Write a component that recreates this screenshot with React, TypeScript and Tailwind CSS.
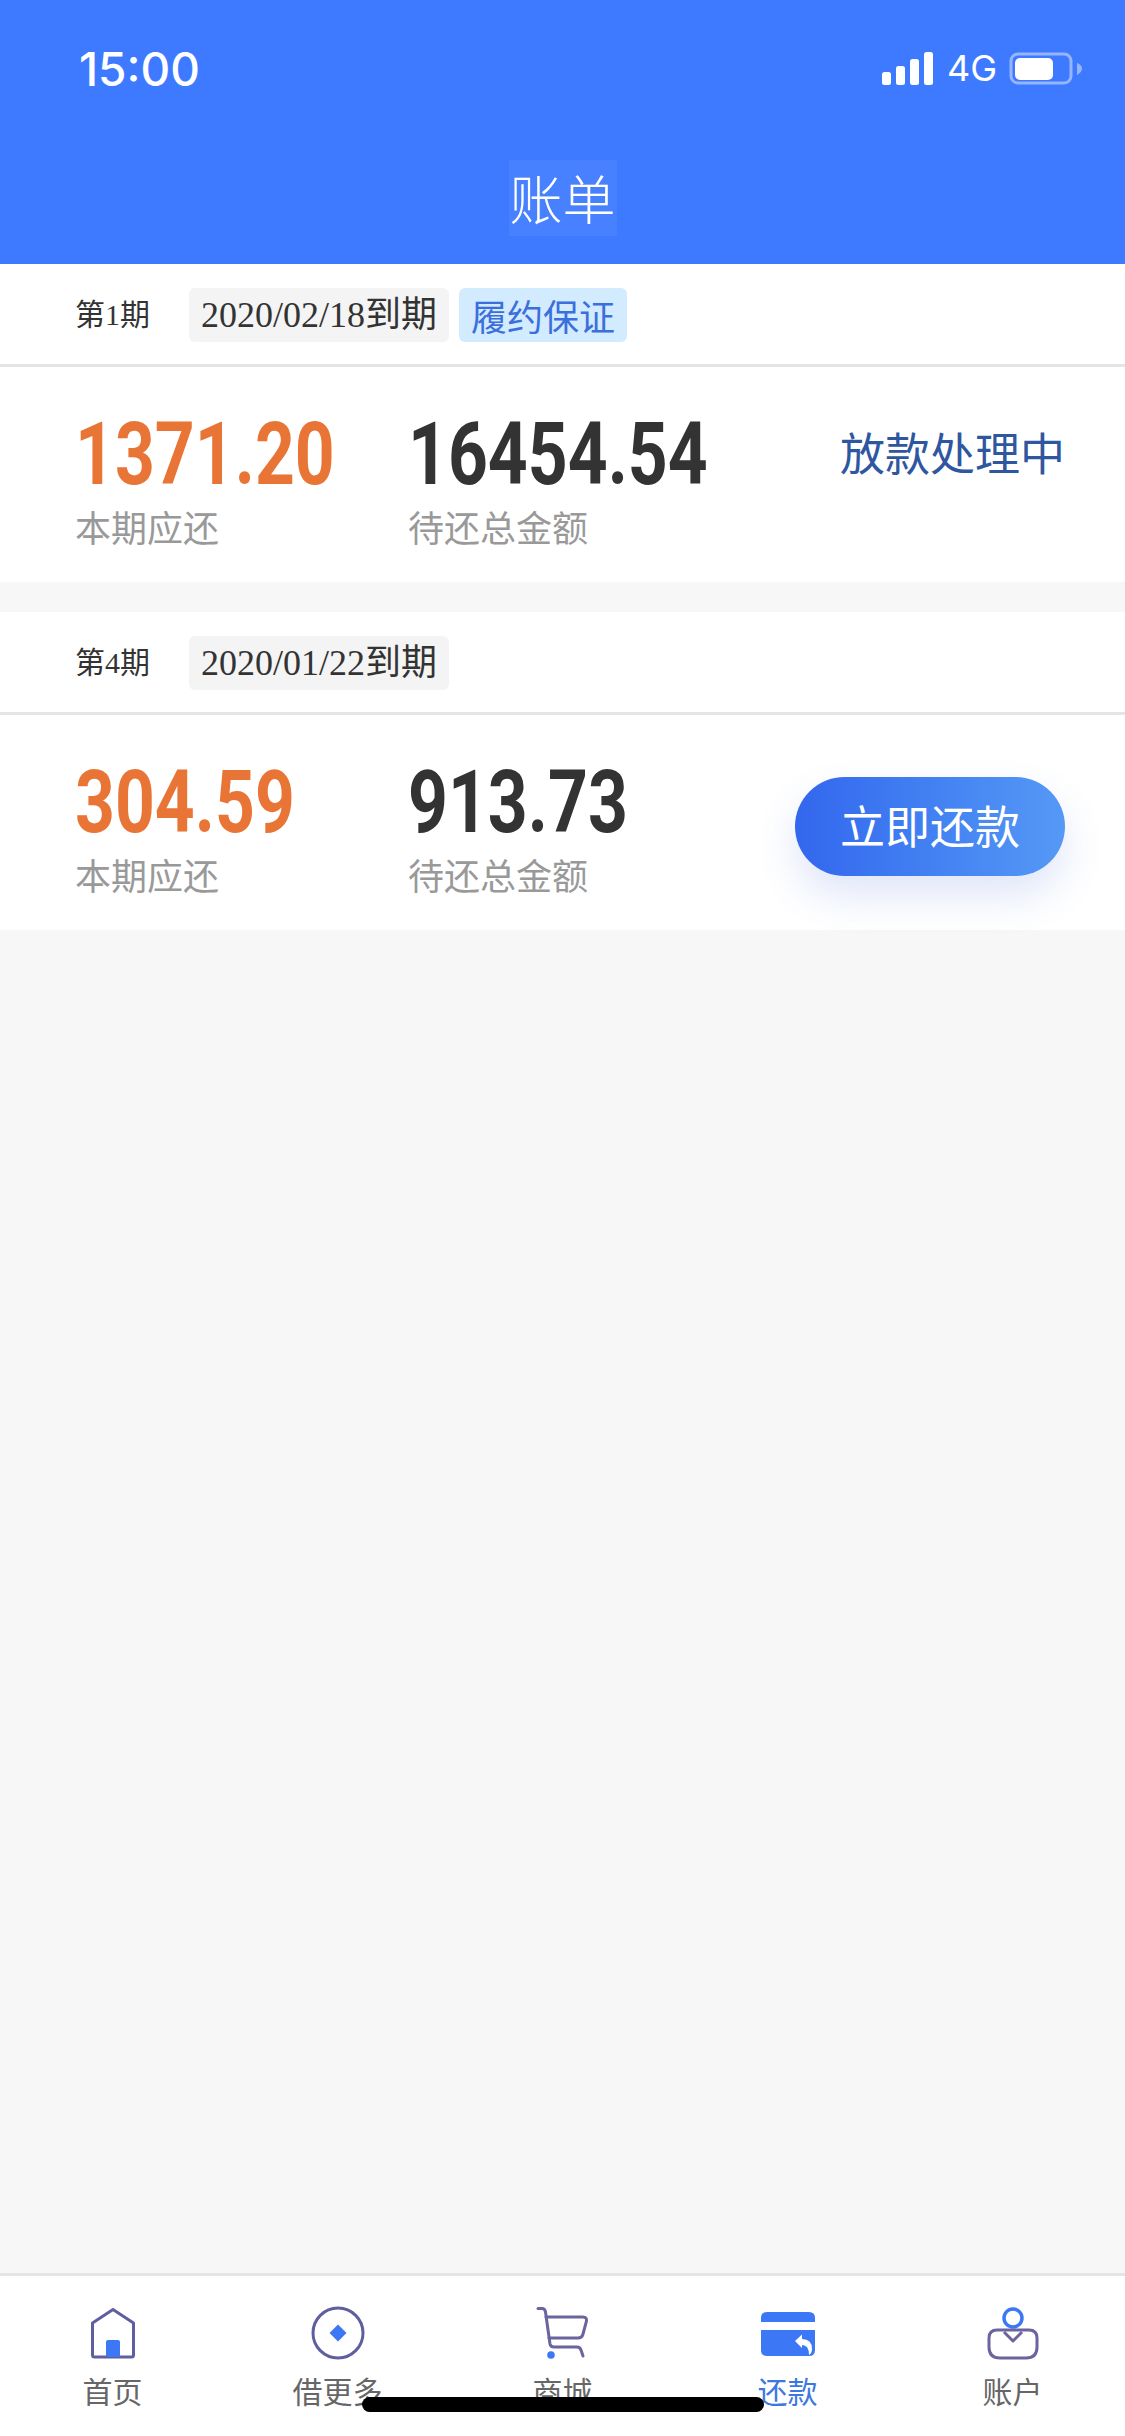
const CJK = "'Noto Sans CJK SC', sans-serif"

const TABS = [
  { label: '首页', icon: <HomeIcon /> },
  { label: '借更多', icon: <DiamondIcon /> },
  { label: '商城', icon: <CartIcon /> },
  { label: '还款', icon: <CardIcon />, active: true },
  { label: '账户', icon: <UserIcon /> },
]

function HomeIcon() {
  return (
    <svg width="60" height="60" viewBox="0 0 60 60" fill="none">
      <path d="M30 6.500 L50.500 20 V52 Q50.500 54 48.500 54 H11.500 Q9.500 54 9.500 52 V20 Z" stroke="#5F5F9F" strokeWidth="3" strokeLinejoin="round" />
      <rect x="23" y="37" width="14" height="17" rx="2" fill="#3C78F5" />
    </svg>
  )
}

function DiamondIcon() {
  return (
    <svg width="60" height="60" viewBox="0 0 60 60" fill="none">
      <circle cx="30" cy="30" r="25" stroke="#5F5F9F" strokeWidth="3" />
      <path d="M30 21.500 L38.500 30 L30 38.500 L21.500 30 Z" fill="#3C78F5" />
    </svg>
  )
}

function CartIcon() {
  return (
    <svg width="60" height="60" viewBox="0 0 60 60" fill="none">
      <path d="M5 5.500 H9 Q12 5.500 12.500 9 L17 41 Q17.500 44 21 44 H44 Q47 44 48 47 L50 53" stroke="#6B659F" strokeWidth="3" strokeLinecap="round" />
      <path d="M13 14 H50 Q54 14 53.500 18 L50 31 Q49 35 45 35 H16" stroke="#6B659F" strokeWidth="3" strokeLinecap="round" />
      <circle cx="18" cy="52" r="3.800" fill="#3C78F5" />
    </svg>
  )
}

function CardIcon() {
  return (
    <svg width="60" height="60" viewBox="0 0 60 60" fill="none">
      <path d="M3 15 Q3 9 9 9 H51 Q57 9 57 15 V19 H3 Z" fill="#3C78F5" />
      <path d="M3 27 H57 V47 Q57 53 51 53 H9 Q3 53 3 47 Z" fill="#3C78F5" />
      <path d="M37 38 L44 31.500 V36 Q54 36 54 46 Q54 50 51 52 Q51 42 44 42 V45 Z" fill="#fff" />
    </svg>
  )
}

function UserIcon() {
  return (
    <svg width="60" height="60" viewBox="0 0 60 60" fill="none">
      <circle cx="30" cy="15" r="9" stroke="#3C78F5" strokeWidth="3.500" />
      <path d="M14 27 H46 Q54 27 54 35 V44 Q54 55 43 55 H17 Q6 55 6 44 V35 Q6 27 14 27 Z" stroke="#6B659F" strokeWidth="3" />
      <path d="M21 29 L30 38 L39 29" stroke="#6B659F" strokeWidth="3" strokeLinejoin="round" />
    </svg>
  )
}

function StatusBar() {
  return (
    <div className="flex items-start justify-between pl-[79px] pr-[43px] pt-[46px] text-white">
      <span className="text-[46px] leading-[46px] font-medium" style={{ fontFamily: "Inter, sans-serif" }}>15:00</span>
      <div className="flex items-center pt-[6px]">
        <svg width="51" height="33" viewBox="0 0 51 33" fill="#fff">
          <rect x="0" y="20" width="9" height="13" rx="2.500" />
          <rect x="14" y="14" width="9" height="19" rx="2.500" />
          <rect x="28" y="7" width="9" height="26" rx="2.500" />
          <rect x="42" y="0" width="9" height="33" rx="2.500" />
        </svg>
        <span className="ml-[14px] w-[62px] text-[36px] leading-[33px]" style={{ fontFamily: "Inter, sans-serif" }}>4G</span>
        <svg width="73" height="33" viewBox="0 0 73 33" fill="none">
          <rect x="2" y="2" width="60" height="29" rx="7" stroke="#fff" strokeOpacity="0.45" strokeWidth="3" />
          <rect x="6" y="6" width="38" height="22" rx="5" fill="#fff" />
          <path d="M68 11 Q73 13 73 16.500 Q73 20 68 23 Z" fill="#fff" fillOpacity="0.45" />
        </svg>
      </div>
    </div>
  )
}

interface BillProps {
  period: string
  due: string
  guarantee?: boolean
  amount: string
  total: string
  action: React.ReactNode
}

function Bill({ period, due, guarantee, amount, total, action }: BillProps) {
  return (
    <section className="bg-white">
      <div className="flex h-[100px] items-center pt-[1px] pl-[75px]">
        <span className="w-[114px] text-[30px] text-[#333]" style={{ fontFamily: "'Liberation Serif', " + CJK }}>{period}</span>
        <span className="flex h-[54px] w-[260px] items-center justify-center rounded-[6px] bg-[#F4F4F4] text-[36px] text-[#333]" style={{ fontFamily: "'Liberation Serif', " + CJK }}>{due}</span>
        {guarantee && (
          <span className="ml-[10px] flex h-[54px] w-[168px] items-center justify-center rounded-[6px] bg-[#D2EBFF] text-[36px] text-[#3A6FDC]">履约保证</span>
        )}
      </div>
      <div className="h-[3px] bg-[#E5E5E5]" />
      <div className="flex h-[215px] items-start pl-[75px] pr-[60px]">
        <div className="w-[333px] pt-[37px]">
          <p className="origin-left scale-x-[0.8] text-[87px] leading-[100px] font-bold whitespace-nowrap text-[#E87535]" style={{ fontFamily: "Roboto, sans-serif" }}>{amount}</p>
          <p className="text-[36px] leading-[44px] text-[#999]">本期应还</p>
        </div>
        <div className="pt-[37px]">
          <p className="origin-left scale-x-[0.8] text-[87px] leading-[100px] font-bold whitespace-nowrap text-[#333]" style={{ fontFamily: "Roboto, sans-serif" }}>{total}</p>
          <p className="text-[36px] leading-[44px] text-[#999]">待还总金额</p>
        </div>
        <div className="ml-auto">{action}</div>
      </div>
    </section>
  )
}

export default function App() {
  return (
    <div className="relative flex min-h-[2436px] flex-col overflow-hidden bg-[#F7F7F7]" style={{ fontFamily: CJK }}>
      <header className="h-[264px] bg-[#3E7AFF]">
        <StatusBar />
        <div className="mt-[68px] flex justify-center">
          <h1 className="flex h-[76px] w-[108px] items-center justify-center bg-white/5 text-[53px] font-light text-white">账单</h1>
        </div>
      </header>

      <Bill
        period="第1期"
        due="2020/02/18到期"
        guarantee
        amount="1371.20"
        total="16454.54"
        action={<p className="pt-[53px] text-[45px] leading-[64px] text-[#2F579F]">放款处理中</p>}
      />
      <div className="h-[30px]" />
      <Bill
        period="第4期"
        due="2020/01/22到期"
        amount="304.59"
        total="913.73"
        action={
          <button className="mt-[62px] h-[99px] w-[270px] rounded-full bg-gradient-to-r from-[#3366EE] to-[#5599F5] pb-[3px] text-[45px] text-white shadow-[0_20px_40px_rgba(60,100,220,0.16)]">
            立即还款
          </button>
        }
      />

      <nav className="mt-auto grid h-[163px] grid-cols-5 border-t-[3px] border-[#E5E5E5] bg-white pt-[27px]">
        {TABS.map(tab => (
          <div key={tab.label} className="flex flex-col items-center">
            {tab.icon}
            <span className={`mt-[9px] text-[30px] leading-[36px] ${tab.active ? 'text-[#3C78E0]' : 'text-[#666]'}`}>{tab.label}</span>
          </div>
        ))}
      </nav>

      <div className="absolute bottom-[24px] left-[362px] h-[15px] w-[402px] rounded-full bg-black" />
    </div>
  )
}
